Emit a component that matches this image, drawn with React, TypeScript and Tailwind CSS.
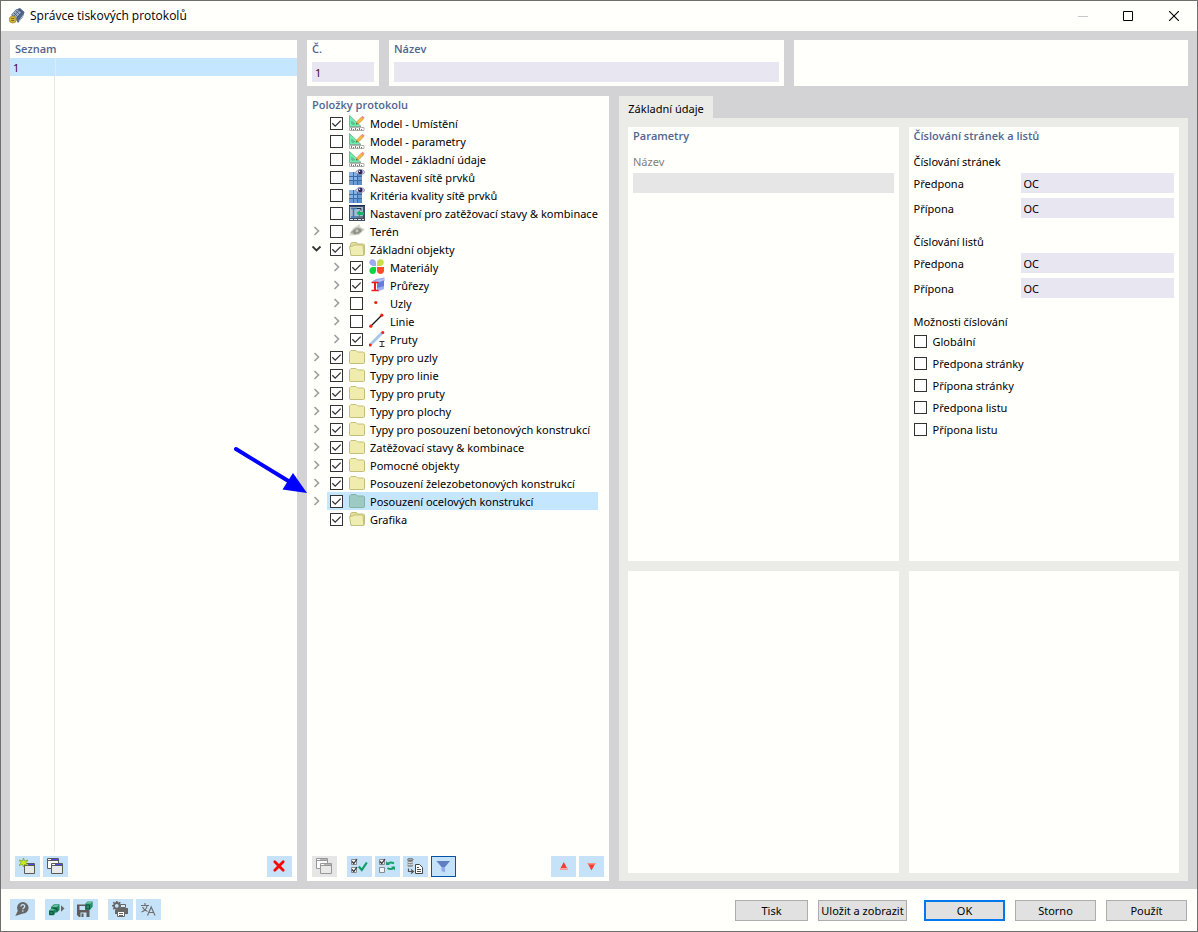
import { useState } from "react";
import type { ReactNode } from "react";

type IconName =
  | "model"
  | "mesh"
  | "loads"
  | "terrain"
  | "open"
  | "folder"
  | "materials"
  | "sections"
  | "node"
  | "line"
  | "member";

type Item = {
  label: string;
  icon: IconName;
  checked?: boolean;
  branch?: "closed" | "open";
  child?: boolean;
  selected?: boolean;
};

const items: Item[] = [
  { label: "Model - Umístění", icon: "model", checked: true },
  { label: "Model - parametry", icon: "model" },
  { label: "Model - základní údaje", icon: "model" },
  { label: "Nastavení sítě prvků", icon: "mesh" },
  { label: "Kritéria kvality sítě prvků", icon: "mesh" },
  { label: "Nastavení pro zatěžovací stavy & kombinace", icon: "loads" },
  { label: "Terén", icon: "terrain", branch: "closed" },
  { label: "Základní objekty", icon: "open", checked: true, branch: "open" },
  { label: "Materiály", icon: "materials", checked: true, branch: "closed", child: true },
  { label: "Průřezy", icon: "sections", checked: true, branch: "closed", child: true },
  { label: "Uzly", icon: "node", branch: "closed", child: true },
  { label: "Linie", icon: "line", branch: "closed", child: true },
  { label: "Pruty", icon: "member", checked: true, branch: "closed", child: true },
  { label: "Typy pro uzly", icon: "folder", checked: true, branch: "closed" },
  { label: "Typy pro linie", icon: "folder", checked: true, branch: "closed" },
  { label: "Typy pro pruty", icon: "folder", checked: true, branch: "closed" },
  { label: "Typy pro plochy", icon: "folder", checked: true, branch: "closed" },
  { label: "Typy pro posouzení betonových konstrukcí", icon: "folder", checked: true, branch: "closed" },
  { label: "Zatěžovací stavy & kombinace", icon: "folder", checked: true, branch: "closed" },
  { label: "Pomocné objekty", icon: "folder", checked: true, branch: "closed" },
  { label: "Posouzení železobetonových konstrukcí", icon: "folder", checked: true, branch: "closed" },
  { label: "Posouzení ocelových konstrukcí", icon: "folder", checked: true, branch: "closed", selected: true },
  { label: "Grafika", icon: "open", checked: true },
];

function TreeIcon({ name, selected }: { name: IconName; selected?: boolean }) {
  return (
    <svg viewBox="0 0 16 16" className="size-4 shrink-0" aria-hidden="true">
      {name === "model" && (
        <>
          <path d="M.5.5v11h11.500z" fill="#6df0ac" stroke="#85b09a" />
          <path d="M3 6.500v2.500h2.500z" fill="#d9fbe9" stroke="#3f9a6e" strokeWidth=".9" />
          <path d="M7.500 9l.5-2.500 4.500-4.500 2 2L10 8.500z" fill="#f9b93e" stroke="#b98c45" strokeWidth=".6" />
          <path d="M12 2.300L13.600.7l2 2L14 4.300z" fill="#ef8f87" />
          <path d="M7 9.500l.5-1.600 1.200 1.100z" fill="#333" />
          <path d="M.5 12.500h14.500v3H.5z" fill="#fafaf8" stroke="#a0a0a0" strokeWidth=".8" />
          <path d="M2.500 13v2M4.500 14v1.500M6.500 13v2M8.500 14v1.500M10.500 13v2M12.500 14v1.500" stroke="#7c7c7c" />
        </>
      )}
      {name === "mesh" && (
        <>
          <path d="M0 3h13v13H0z" fill="#5c90cc" />
          <path d="M0 3h4v4H0zM5 3h3v4H5zM0 8h4v3H0zM5 8h3v3H5z" fill="#86b4e2" />
          <path d="M9 8h4v3H9zM0 12h4v4H0zM5 12h3v4H5z" fill="#6c9dd6" />
          <path d="M4.500 3v13M8.500 3v13M0 7.500h13M0 11.500h13" stroke="#3a6cab" />
          <path d="M6.500 3.300C9-.5 13.500-.5 16 3.300 13.500 6.300 9 6.300 6.500 3.300z" fill="#dcdaeb" stroke="#8480a0" strokeWidth=".8" />
          <circle cx="11.300" cy="3" r="2.300" fill="#2b2258" />
          <circle cx="10.600" cy="2.200" r=".7" fill="#fff" />
        </>
      )}
      {name === "loads" && (
        <>
          <path d="M0 0h16v16H0z" fill="#404c5c" />
          <path d="M1 2h13v11H1z" fill="#a9bdd0" />
          <path d="M0 .5h16" stroke="#1c2c64" />
          <path d="M2 3.500h6M4.500 3.500v8M2 12h6" stroke="#3a78b4" strokeWidth="1.500" />
          <path d="M8 3.500h4v2M8 12h6" stroke="#22313e" fill="none" />
          <path d="M7.500 8L11 5.300V7h4v3h-4v1.500z" fill="#17b461" />
          <path d="M1 14.500h14" stroke="#dfe3e6" strokeDasharray="3 1" />
        </>
      )}
      {name === "terrain" && (
        <>
          <path d="M0 12.500L4 5 10.500 1 11.500 4 16 6.500 10 12z" fill="#dcdcd3" />
          <path d="M1 9.500l4-3.500 4-2 5 2.500-3.500 4-5 1.500z" fill="#b0b1a7" />
          <path d="M3.500 8.500L7 5.500l4.500.5 1 2.500-3.500 2-3.500.5z" fill="#8b8d84" />
          <circle cx="8" cy="7.800" r="1.600" fill="#c6c7bd" />
        </>
      )}
      {name === "folder" && (
        <path
          d="M.5 14V3L2 1.500h5L8.500 3h6l1 1v10l-1 .5H1z"
          fill={selected ? "#9dcac2" : "#efecae"}
          stroke={selected ? "#86b2a2" : "#c3c07b"}
        />
      )}
      {name === "open" && (
        <>
          <path d="M1.500 13V2.500L3 1.500h4.500L8.500 3h6l1 1v9.500z" fill="#e2df99" stroke="#c3c07b" />
          <path d="M.5 5.500l3-.3L5 4h9l.8 10.500H2z" fill="#f0edb2" stroke="#c3c07b" />
        </>
      )}
      {name === "materials" && (
        <>
          <path d="M7 4.500V7H3.500C-1 6-.5 0 3.700.3 6 .5 7 2 7 4.500z" fill="#a0aaf0" />
          <path d="M8 7V4C8 1.500 9.500.3 11.500.3c4.300 0 4.500 6.200 0 6.700z" fill="#c6df4a" />
          <path d="M7 8v3.500C7 14 5.800 15 3.800 15-.8 15-.6 8.500 3.500 8z" fill="#10d640" />
          <path d="M8 8h7v3.500c0 2.300-1.500 3.500-3.300 3.500C9.500 15 8 13.800 8 11.500z" fill="#ff4d2b" />
        </>
      )}
      {name === "sections" && (
        <>
          <path d="M3 4.500L7 2l8.500-1.500V4L9 6.500z" fill="#9cadf0" />
          <path d="M8 6l7-2.500v7L8 13z" fill="#667cd8" />
          <path d="M7 4.500l8-2" stroke="#c3cdf8" />
          <path d="M8 11l7-2v3l-6 2.500z" fill="#9cadf0" />
          <path d="M2.500 5.500h7M2.500 13.500h7" stroke="#f01818" strokeWidth="1.500" />
          <path d="M6 5.500v8" stroke="#f01818" strokeWidth="2" />
        </>
      )}
      {name === "node" && <circle cx="6.800" cy="7.500" r="1.600" fill="#ef2110" />}
      {name === "line" && (
        <>
          <path d="M2 13L13 2" stroke="#111" strokeWidth="1.200" />
          <circle cx="1.800" cy="13.200" r="1.600" fill="#ef2110" />
          <circle cx="12.800" cy="2.200" r="1.600" fill="#ef2110" />
        </>
      )}
      {name === "member" && (
        <>
          <path d="M1.500 13.500L13.500 1.500" stroke="#a6c6ea" strokeWidth="3" />
          <circle cx="1.200" cy="14" r="1.500" fill="#ef2110" />
          <circle cx="13.800" cy="1.500" r="1.500" fill="#ef2110" />
          <path d="M10.500 10.500h5M13 10.500v5M10.500 15.500h5" stroke="#333" />
        </>
      )}
    </svg>
  );
}

function Tick({ id, defaultChecked }: { id?: string; defaultChecked?: boolean }) {
  return (
    <span className="grid size-[13px] shrink-0">
      <input
        id={id}
        type="checkbox"
        defaultChecked={defaultChecked}
        className="peer col-start-1 row-start-1 size-[13px] appearance-none border border-[#333333] bg-white"
      />
      <svg
        viewBox="0 0 13 13"
        aria-hidden="true"
        className="pointer-events-none col-start-1 row-start-1 size-[13px] opacity-0 peer-checked:opacity-100"
      >
        <path d="M2.300 6.300L5.200 9.200L10.700 3.600" fill="none" stroke="#333" strokeWidth="1.300" />
      </svg>
    </span>
  );
}

function Chevron({ open }: { open: boolean }) {
  return (
    <svg viewBox="0 0 10 10" className="size-[10px]" aria-hidden="true">
      {open ? (
        <path d="M.5 2.500l4 4 4-4" fill="none" stroke="#333" strokeWidth="1.800" />
      ) : (
        <path d="M2.500 1l4 4-4 4" fill="none" stroke="#a0a0a0" strokeWidth="1.700" />
      )}
    </svg>
  );
}

function Pointer() {
  return (
    <svg
      viewBox="0 0 73 48"
      className="pointer-events-none absolute right-full bottom-4 h-[48px] w-[73px]"
      aria-hidden="true"
    >
      <path d="M2 3L56 36" stroke="#0000ff" strokeWidth="4" strokeLinecap="round" />
      <path d="M73 47L48.500 43.500L59 27z" fill="#0000ff" />
    </svg>
  );
}

function Tree() {
  return (
    <ul>
      {items.map((item) => (
        <li key={item.label} className={item.child ? "relative flex h-[18px] pl-5" : "relative flex h-[18px]"}>
          {item.branch ? (
            <button type="button" aria-label={item.label} className="grid w-5 shrink-0 place-items-center">
              <Chevron open={item.branch === "open"} />
            </button>
          ) : (
            <span className="w-5 shrink-0" />
          )}
          <label
            className={
              item.selected
                ? "mr-[11px] flex flex-1 items-center bg-[#c4e6ff] pl-[3px]"
                : "mr-[11px] flex flex-1 items-center pl-[3px]"
            }
          >
            <Tick defaultChecked={item.checked} />
            <span className="ml-[6px] flex">
              <TreeIcon name={item.icon} selected={item.selected} />
            </span>
            <span className="ml-[5px] pt-[2px] whitespace-nowrap">{item.label}</span>
          </label>
          {item.selected && <Pointer />}
        </li>
      ))}
    </ul>
  );
}

function Tool({
  label,
  variant = "normal",
  children,
}: {
  label: string;
  variant?: "normal" | "active" | "disabled";
  children: ReactNode;
}) {
  const look = {
    normal: "bg-[#c6e2f9]",
    active: "border border-[#0054a8] bg-[#c6e2f9]",
    disabled: "bg-[#e6e6e6]",
  }[variant];
  return (
    <button
      type="button"
      aria-label={label}
      disabled={variant === "disabled"}
      className={`grid h-[21px] w-[25px] shrink-0 place-items-center ${look}`}
    >
      <svg viewBox="0 0 17 17" className="size-[17px]" fill="none" aria-hidden="true">
        {children}
      </svg>
    </button>
  );
}

function Windows({ bar, line }: { bar: string; line: string }) {
  return (
    <>
      <path d="M.5.5h11v10H.5z" fill="#fafaf9" stroke={line} />
      <path d="M4 1.500h7" stroke={bar} />
      <path d="M.5 2.500h11" stroke={line} />
      <path d="M4.500 5.500h11v10h-11z" fill="#e9e9e8" stroke={line} />
      <path d="M5 6.500h3" stroke="#fafaf9" />
      <path d="M8 6.500h7" stroke={bar} />
      <path d="M4.500 7.500h11" stroke={line} />
    </>
  );
}

function Heading({ children }: { children: ReactNode }) {
  return (
    <h2 className="h-[18px] font-['Open_Sans','Noto_Sans',sans-serif] text-[11px] leading-[18px] font-semibold text-[#506690]">
      {children}
    </h2>
  );
}

function NumberingGroup({ title, name }: { title: string; name: string }) {
  return (
    <fieldset className="min-w-0">
      <legend className="leading-[18px]">{title}</legend>
      <div className="mt-[2px] flex flex-col gap-[5px]">
        {["Předpona", "Přípona"].map((label) => (
          <div key={label} className="flex h-5 items-center">
            <label htmlFor={`${name}-${label}`} className="w-[107px] shrink-0 pt-[2px]">
              {label}
            </label>
            <input id={`${name}-${label}`} defaultValue="OC" className="h-5 min-w-0 flex-1 bg-[#e7e6f1] px-[3px]" />
          </div>
        ))}
      </div>
    </fieldset>
  );
}

function DialogButton({ children, width, primary }: { children: ReactNode; width: string; primary?: boolean }) {
  return (
    <button
      type="button"
      className={`h-[21px] whitespace-nowrap bg-[#e1e1e1] ${width} ${
        primary ? "border-2 border-[#0078ee]" : "border border-[#adadad]"
      } flex items-center justify-center`}
    >
      {children}
    </button>
  );
}

export default function App() {
  const [name, setName] = useState("");
  return (
    <div className="flex min-h-screen flex-col border border-[#6f6f6d] bg-[#fffffc] font-['Noto_Sans','Open_Sans',sans-serif] text-[11px] leading-[18px] text-black">
      <header className="flex h-[30px] shrink-0 items-center pl-2">
        <svg viewBox="0 0 16 16" className="size-4" aria-hidden="true">
          <path d="M2 7L7 1.500 11 0l4.500 4L14 9 9 15 6 10z" fill="#51648a" />
          <path d="M3 6.500L8 1.500l4 3L7.500 10z" fill="#9eafca" />
          <path d="M5 5l4 4M7 3l4 4M5 8l5-5.500M8 9.500L13 4M10 1l4 4" stroke="#465777" strokeWidth=".8" />
          <path d="M10 13l4.500-6" stroke="#bfc8d8" />
          <circle cx="3.800" cy="11.500" r="3.500" fill="#d4b63b" stroke="#a78a22" strokeWidth=".8" />
          <path d="M2.300 10.500h3M2.300 12.500h3" stroke="#7a6720" />
        </svg>
        <h1 className="ml-[5px] flex-1 font-['Open_Sans','Noto_Sans',sans-serif] text-[12px]">
          Správce tiskových protokolů
        </h1>
        <button type="button" disabled aria-label="Minimalizovat" className="grid h-full w-[45px] place-items-center">
          <svg viewBox="0 0 10 10" className="size-[10px]" aria-hidden="true">
            <path d="M0 5.500h10" stroke="#c8c8c8" />
          </svg>
        </button>
        <button type="button" aria-label="Maximalizovat" className="grid h-full w-[46px] place-items-center">
          <svg viewBox="0 0 10 10" className="size-[10px]" aria-hidden="true">
            <path d="M.5.5h9v9h-9z" fill="none" stroke="#000" />
          </svg>
        </button>
        <button type="button" aria-label="Zavřít" className="grid h-full w-[46px] place-items-center">
          <svg viewBox="0 0 10 10" className="size-[10px]" aria-hidden="true">
            <path d="M0 0l10 10M10 0L0 10" stroke="#000" strokeWidth="1.100" />
          </svg>
        </button>
      </header>

      <main className="flex flex-1 gap-[10px] bg-[#d3d3d5] px-[9px] pt-[9px] pb-2">
        <section className="flex w-[287px] shrink-0 flex-col bg-[#fffffc] pb-1">
          <div className="pl-[5px]">
            <Heading>Seznam</Heading>
          </div>
          <div className="flex flex-1 flex-col bg-[linear-gradient(#e9e9e6,#e9e9e6)] bg-[length:1px_100%] bg-[position:44px_0] bg-no-repeat">
            <table className="w-full border-collapse">
              <tbody>
                <tr className="h-[18px] bg-[#c4e6ff] leading-4 text-[#480030]">
                  <td className="w-[45px] border-r border-[#e6e8ec] p-0 pt-[2px] pl-[3px]">1</td>
                  <td className="p-0" />
                </tr>
              </tbody>
            </table>
          </div>
          <div className="mt-1 flex gap-[3px] px-[5px]">
            <Tool label="Nový">
              <path d="M5.500 5.500h10v10h-10z" fill="#e9e9e8" stroke="#5a5a5a" />
              <path d="M6 6.500h3" stroke="#fafaf9" />
              <path d="M9 6.500h6" stroke="#5048f0" />
              <path d="M5.500 7.500h10" stroke="#5a5a5a" />
              <path
                d="M4.500 0l1 3 3.500-1-2 2.700 2 2.800-3.500-1-1 2.500-1-2.500L0 7.500l2-2.800L0 2l3.500 1z"
                fill="#c9ef12"
                stroke="#6d8f2c"
                strokeWidth=".6"
              />
            </Tool>
            <Tool label="Kopírovat">
              <Windows bar="#5048f0" line="#5a5a5a" />
            </Tool>
            <span className="flex-1" />
            <Tool label="Smazat">
              <path d="M3.800 3.800l8.400 8.400M12.200 3.800l-8.400 8.400" stroke="#f80808" strokeWidth="2.800" strokeLinecap="round" />
            </Tool>
          </div>
        </section>

        <div className="flex min-w-0 flex-1 flex-col gap-[10px]">
          <div className="grid grid-cols-[72px_1fr_1fr] gap-[10px]">
            <section className="bg-[#fffffc] px-[5px] pb-1">
              <Heading>
                <label htmlFor="number">Č.</label>
              </Heading>
              <input
                id="number"
                defaultValue="1"
                className="mt-1 block h-5 w-full bg-[#e7e6f1] px-[3px] text-[#480030]"
              />
            </section>
            <section className="bg-[#fffffc] px-[5px] pb-1">
              <Heading>
                <label htmlFor="name">Název</label>
              </Heading>
              <input
                id="name"
                value={name}
                onChange={(e) => setName(e.target.value)}
                className="mt-1 block h-5 w-full bg-[#e7e6f1] px-[3px]"
              />
            </section>
            <section className="bg-[#fffffc]" />
          </div>

          <div className="flex flex-1 gap-[10px]">
            <section className="flex w-[302px] shrink-0 flex-col bg-[#fffffc] pb-1">
              <div className="pl-[5px]">
                <Heading>Položky protokolu</Heading>
              </div>
              <Tree />
              <div className="mt-auto flex gap-[3px] px-[5px]">
                <Tool label="Kopírovat položku" variant="disabled">
                  <Windows bar="#b4b4b4" line="#989898" />
                </Tool>
                <span className="w-1" />
                <Tool label="Vybrat vše">
                  <path d="M.5 1.500h5v5h-5zM.5 9.500h5v5h-5z" fill="#eef4f8" stroke="#8a8a8a" />
                  <path d="M1 3.500l1.800 2L6 1M1 11.500l1.800 2L6 9" stroke="#333" strokeWidth="1.200" />
                  <path d="M7.800 8.500l3 3.500 5-7.500" stroke="#0f9e63" strokeWidth="2.200" />
                </Tool>
                <Tool label="Obrátit výběr">
                  <path d="M.5 1.500h5v5h-5zM.5 9.500h5v5h-5z" fill="#eef4f8" stroke="#8a8a8a" />
                  <path d="M1 3.500l1.800 2L6 1" stroke="#333" strokeWidth="1.200" />
                  <path d="M8.500 6c2-2 4.500-1.800 6.500-.5M15 9.500c-2 2-4.500 1.800-6.500.5" stroke="#169e67" strokeWidth="2" />
                  <path d="M7 3v4h4zM16 12.500v-4h-4z" fill="#169e67" />
                </Tool>
                <Tool label="Načíst z databáze">
                  <path d="M.5 1.500v6.500c1 1.200 4.500 1.200 5.500 0V1.500z" fill="#8b8b8b" />
                  <path d="M.5 3.800c1 1 4.500 1 5.500 0M.5 6c1 1 4.500 1 5.500 0" stroke="#d9e5ed" />
                  <ellipse cx="3.300" cy="1.500" rx="2.800" ry="1.100" fill="#aaa" stroke="#666" strokeWidth=".8" />
                  <path d="M1.500 10.500v3H6M4 11.500l2.500 2-2.500 2" stroke="#555" strokeWidth="1.200" />
                  <path d="M8.500 6.500h4l3 3v6h-7z" fill="#fff" stroke="#444" />
                  <path d="M10 9.500h2M10 11.500h4M10 13.500h4" stroke="#555" />
                </Tool>
                <Tool label="Filtr" variant="active">
                  <path d="M1.500 3h13.500L10 9H6.500z" fill="#5f7fc2" />
                  <path d="M6.500 9H10v5.500L6.500 13z" fill="#8faaf0" />
                </Tool>
                <span className="flex-1" />
                <Tool label="Nahoru">
                  <path d="M8.800 4l4 7.500H4.800z" fill="#f43c30" />
                  <path d="M5.300 10h7l.5 1.500h-8z" fill="#f8aaa5" />
                </Tool>
                <Tool label="Dolů">
                  <path d="M4.500 5h8l-4 7.500z" fill="#f43c30" />
                  <path d="M4.500 5h8l-.5 1.500H5z" fill="#f98e86" />
                </Tool>
              </div>
            </section>

            <div className="flex min-w-0 flex-1 flex-col">
              <div role="tablist" className="flex">
                <button
                  type="button"
                  role="tab"
                  aria-selected="true"
                  className="flex h-[22px] w-[94px] items-center justify-center bg-[#ebece8] pt-1"
                >
                  Základní údaje
                </button>
              </div>
              <div
                role="tabpanel"
                className="grid flex-1 grid-cols-2 grid-rows-[434px_1fr] gap-[10px] bg-[#ebece8] px-[9px] pt-[9px] pb-2"
              >
                <section className="bg-[#fffffc] px-[5px]">
                  <Heading>Parametry</Heading>
                  <label htmlFor="param-name" className="mt-2 block text-[#7f7f7f]">
                    Název
                  </label>
                  <input id="param-name" disabled className="mt-[2px] block h-5 w-full bg-[#e6e6e6] px-[3px]" />
                </section>
                <section className="bg-[#fffffc] px-[5px]">
                  <Heading>Číslování stránek a listů</Heading>
                  <div className="mt-2 flex flex-col gap-[15px]">
                    <NumberingGroup title="Číslování stránek" name="pages" />
                    <NumberingGroup title="Číslování listů" name="sheets" />
                    <fieldset className="min-w-0">
                      <legend className="leading-[18px]">Možnosti číslování</legend>
                      {["Globální", "Předpona stránky", "Přípona stránky", "Předpona listu", "Přípona listu"].map(
                        (label) => (
                          <label key={label} className="flex h-[22px] items-start gap-[6px] pt-1 leading-[14px]">
                            <Tick />
                            {label}
                          </label>
                        ),
                      )}
                    </fieldset>
                  </div>
                </section>
                <section className="bg-[#fffffc]" />
                <section className="bg-[#fffffc]" />
              </div>
            </div>
          </div>
        </div>
      </main>

      <footer className="flex h-[42px] shrink-0 items-start justify-between pt-[10px] pr-[10px] pl-[9px]">
        <div className="flex gap-[10px]">
          <Tool label="Nápověda">
            <circle cx="8.800" cy="6.800" r="5.800" fill="#666" />
            <path d="M4 9.500L1.300 15 9 12.500z" fill="#666" />
            <path d="M7 5.500c0-2.500 3.700-2.500 3.700 0 0 1.500-1.900 1.500-1.900 2.800M8.800 9.300v1.500" stroke="#c6e2f9" strokeWidth="1.300" />
          </Tool>
          <div className="flex gap-[3px]">
            <Tool label="Načíst">
              <path d="M2 6l3-2.700h5.500V9L8 11.500H6.500L5 14.300H0V9.500L2 8z" fill="#1f8560" />
              <path d="M3 6l2.500-2.200H10L8 6zM.5 9.500L2 8h3.500l-1 1.500z" fill="#62c09b" />
              <path d="M.8 10.500h3.400v3H.8zM4 7.300h4v3" stroke="#10573e" />
              <path d="M12 4.300l3.500 3.300L12 10.800z" fill="#666" />
            </Tool>
            <Tool label="Uložit">
              <path d="M0 3.500h8v5.500h4.500v7H2l-2-2z" fill="#5c5c5c" />
              <path d="M2.500 5H8v4H2.500zM3.500 11.500h6V16h-6z" fill="#c6e2f9" />
              <path d="M4.500 12.500h2V16h-2z" fill="#5c5c5c" />
              <path d="M8 3l2.500-2.500h5.200V5.500L13 9H8z" fill="#25906a" />
              <path d="M9 4h3.500v3.800H9z" stroke="#10573e" />
              <path d="M8.800 2.700L10.700 1h4.500l-1.700 1.700z" fill="#62c09b" />
            </Tool>
          </div>
          <div className="flex gap-[3px]">
            <Tool label="Nastavení tisku">
              <circle cx="4.800" cy="4.800" r="2.800" stroke="#666" strokeWidth="1.800" />
              <path
                d="M4.800 0v2M4.800 7.500v2M0 4.800h2M1.300 1.300l1.500 1.500M8.300 1.300L6.800 2.800M1.300 8.300l1.500-1.500"
                stroke="#666"
                strokeWidth="1.600"
              />
              <path d="M8.500 3.500h5v3h-5z" fill="#d8ebf9" stroke="#666" />
              <path d="M3 8.500h3V7h10v6H3z" fill="#666" />
              <path d="M5.500 10.500h7v5h-7z" fill="#fff" stroke="#666" />
              <path d="M7 12.500h4M7 14.500h4" stroke="#666" />
            </Tool>
            <Tool label="Jazyk">
              <path
                d="M1 4.500h8M5 2v2.500M1.500 11c3-1 5-3 5.700-6.500M2.500 6c1 2.200 2.700 3.800 5 4.500"
                stroke="#707070"
                strokeWidth="1.200"
              />
              <path d="M7.500 14.500l3.700-8.500L15 14.500M8.800 11.500h4.900" stroke="#707070" strokeWidth="1.200" />
            </Tool>
          </div>
        </div>
        <div className="flex gap-[17px] pt-px">
          <div className="flex gap-[10px]">
            <DialogButton width="w-[73px]">Tisk</DialogButton>
            <DialogButton width="w-[89px]">Uložit a zobrazit</DialogButton>
          </div>
          <div className="flex gap-[10px]">
            <DialogButton width="w-[81px]" primary>
              OK
            </DialogButton>
            <DialogButton width="w-[81px]">Storno</DialogButton>
            <DialogButton width="w-[81px]">Použít</DialogButton>
          </div>
        </div>
      </footer>
    </div>
  );
}
